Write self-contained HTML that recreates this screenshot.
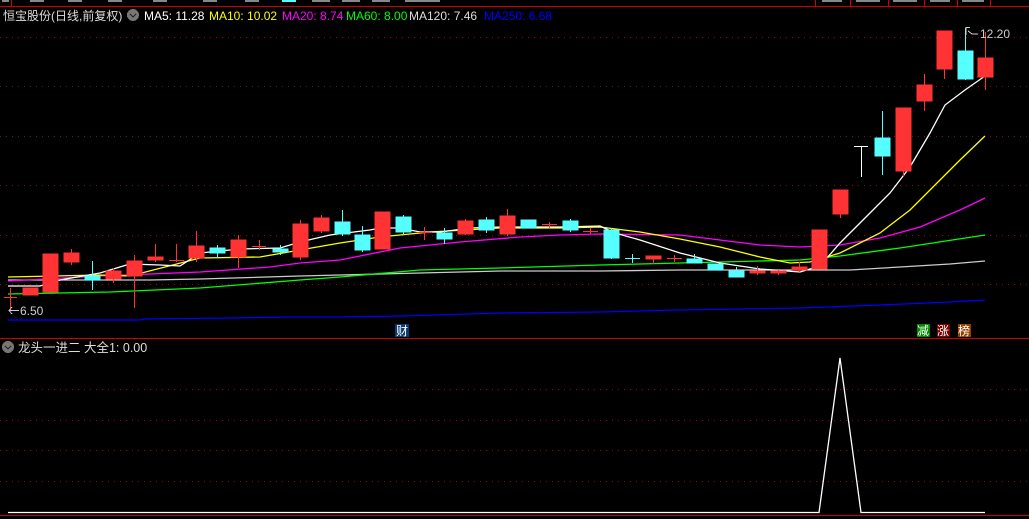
<!DOCTYPE html>
<html><head><meta charset="utf-8"><style>
html,body{margin:0;padding:0;background:#000;width:1029px;height:519px;overflow:hidden}
svg{display:block}
text{font-family:"Liberation Sans","Noto Sans CJK SC",sans-serif}
</style></head><body>
<svg width="1029" height="519" viewBox="0 0 1029 519" xmlns="http://www.w3.org/2000/svg" shape-rendering="crispEdges">
<rect width="1029" height="519" fill="#000"/>
<line x1="0" y1="6.5" x2="1029" y2="6.5" stroke="#c00" stroke-width="1"/>
<g stroke="#c00"><line x1="11.5" y1="0" x2="11.5" y2="6"/><line x1="815.5" y1="0" x2="815.5" y2="6"/><line x1="850.5" y1="0" x2="850.5" y2="6"/><line x1="888.5" y1="0" x2="888.5" y2="6"/><line x1="924.5" y1="0" x2="924.5" y2="6"/><line x1="957.5" y1="0" x2="957.5" y2="6"/><line x1="990.5" y1="0" x2="990.5" y2="6"/></g>
<g fill="#888"><rect x="2" y="0" width="7" height="2"/><rect x="30" y="0" width="14" height="2"/><rect x="68" y="0" width="14" height="2"/><rect x="108" y="0" width="14" height="2"/><rect x="153" y="0" width="14" height="2"/><rect x="203" y="0" width="14" height="2"/><rect x="245" y="0" width="14" height="2"/><rect x="282" y="0" width="14" height="2" fill="#5ff"/><rect x="312" y="0" width="18" height="2"/><rect x="342" y="0" width="18" height="2"/><rect x="372" y="0" width="18" height="2"/><rect x="405" y="0" width="35" height="2"/><rect x="822" y="0" width="20" height="2"/><rect x="856" y="0" width="24" height="2"/><rect x="893" y="0" width="24" height="2"/><rect x="930" y="0" width="20" height="2"/><rect x="962" y="0" width="22" height="2"/></g>
<text x="3" y="20" font-size="12" fill="#ddd">恒宝股份(日线,前复权)</text>
<circle cx="133" cy="15" r="6" fill="#777"/><path d="M130 14 L133 17 L136 14" stroke="#222" stroke-width="1.3" fill="none"/>
<text y="20" font-size="12" xml:space="preserve"><tspan x="144" fill="#fff">MA5: 11.28</tspan><tspan x="209" fill="#ff0">MA10: 10.02</tspan><tspan x="282" fill="#f0f">MA20: 8.74</tspan><tspan x="346" fill="#0f0">MA60: 8.00</tspan><tspan x="409" fill="#ddd">MA120: 7.46</tspan><tspan x="484" fill="#00f">MA250: 6.68</tspan></text>
<g stroke="#a00" stroke-dasharray="1 5" stroke-width="1">
<line x1="0" y1="37.5" x2="1029" y2="37.5"/><line x1="0" y1="86.5" x2="1029" y2="86.5"/><line x1="0" y1="136.5" x2="1029" y2="136.5"/><line x1="0" y1="185.5" x2="1029" y2="185.5"/><line x1="0" y1="235.5" x2="1029" y2="235.5"/><line x1="0" y1="284.5" x2="1029" y2="284.5"/>
<line x1="0" y1="389.5" x2="1029" y2="389.5"/><line x1="0" y1="420.5" x2="1029" y2="420.5"/><line x1="0" y1="450.5" x2="1029" y2="450.5"/><line x1="0" y1="481.5" x2="1029" y2="481.5"/>
</g>
<g fill="none" stroke-width="1.3" shape-rendering="auto">
<polyline stroke="#00f" points="8,320 140,320 145,319 230,318 290,317 340,317 400,316 500,313 600,312 680,310 800,308 880,305 950,302 985,300"/>
<polyline stroke="#ccc" points="8,280 150,280 200,279 300,276 340,275 420,273 500,271 600,271 680,270 850,270 900,267 950,264 985,261"/>
<polyline stroke="#0f0" points="8,294 110,292 200,288 300,280 340,277 420,270 500,268 600,265 680,263 760,261 800,260 840,256 900,248 985,235"/>
<polyline stroke="#f0f" points="8,281 100,276 200,272 270,267 300,263 340,260 400,248 460,242 520,237 560,235 600,234 680,235 720,240 760,245 800,247 840,245 880,238 920,227 960,210 985,198"/>
<polyline stroke="#ff0" points="8,277 100,275 130,276 200,258 260,257 300,250 340,243 380,237 430,232 500,228 560,228 600,227 640,232 680,239 720,247 760,257 790,263 810,262 840,253 880,233 910,210 940,180 960,160 985,136"/>
<polyline stroke="#fff" points="8,286 40,286 60,280 100,273 130,264 160,265 180,266 200,253 240,249 280,248 300,242 330,235 370,230 380,228 400,228 420,232 440,232 470,228 500,227 560,227 600,226 615,233 640,240 680,253 720,263 760,269 800,272 820,266 840,243 870,213 890,193 910,167 930,133 945,105 965,90 985,76"/>
</g>
<g fill="#f33" stroke="#f33">
<line x1="10.5" y1="288" x2="10.5" y2="310"/><line x1="4" y1="297.5" x2="17" y2="297.5"/>
<rect x="23" y="288" width="15" height="7"/>
<rect x="43" y="254" width="15" height="38"/>
<line x1="71.5" y1="249" x2="71.5" y2="265"/><rect x="64" y="253" width="15" height="9"/>
<line x1="113.5" y1="268" x2="113.5" y2="283"/><rect x="106" y="271" width="15" height="8"/>
<line x1="134.5" y1="255" x2="134.5" y2="308"/><rect x="127" y="261" width="15" height="15"/>
<line x1="155.5" y1="244" x2="155.5" y2="262"/><rect x="148" y="257" width="15" height="3"/>
<line x1="176.5" y1="244" x2="176.5" y2="262"/><line x1="169" y1="260.5" x2="184" y2="260.5"/>
<line x1="196.5" y1="231" x2="196.5" y2="262"/><rect x="189" y="246" width="15" height="12"/>
<line x1="238.5" y1="235" x2="238.5" y2="268"/><rect x="231" y="240" width="15" height="17"/>
<line x1="259.5" y1="240" x2="259.5" y2="250"/><line x1="252" y1="246.5" x2="266" y2="246.5"/>
<line x1="300.5" y1="220" x2="300.5" y2="260"/><rect x="293" y="224" width="15" height="33"/>
<line x1="321.5" y1="215" x2="321.5" y2="233"/><rect x="314" y="218" width="15" height="13"/>
<rect x="375" y="212" width="15" height="37"/>
<line x1="424.5" y1="227" x2="424.5" y2="240"/><line x1="417" y1="232.5" x2="432" y2="232.5"/>
<line x1="465.5" y1="219" x2="465.5" y2="235"/><rect x="458" y="221" width="15" height="13"/>
<line x1="507.5" y1="209" x2="507.5" y2="236"/><rect x="500" y="216" width="15" height="18"/>
<line x1="549.5" y1="222" x2="549.5" y2="228"/><line x1="542" y1="224.5" x2="557" y2="224.5"/>
<line x1="590.5" y1="228" x2="590.5" y2="234"/><line x1="583" y1="231.5" x2="598" y2="231.5"/>
<line x1="653.5" y1="256" x2="653.5" y2="264"/><rect x="646" y="256" width="15" height="3"/>
<line x1="674.5" y1="255" x2="674.5" y2="262"/><line x1="667" y1="258.5" x2="682" y2="258.5"/>
<line x1="757.5" y1="266" x2="757.5" y2="275"/><rect x="750" y="271" width="15" height="2"/>
<line x1="778.5" y1="270" x2="778.5" y2="275"/><rect x="771" y="271" width="15" height="2"/>
<line x1="799.5" y1="262" x2="799.5" y2="272"/><rect x="792" y="267" width="15" height="3"/>
<rect x="812" y="230" width="15" height="39"/>
<line x1="840.5" y1="214" x2="840.5" y2="218"/><rect x="833" y="190" width="15" height="24"/>
<line x1="903.5" y1="170" x2="903.5" y2="177"/><rect x="896" y="108" width="15" height="63"/>
<line x1="924.5" y1="74" x2="924.5" y2="111"/><rect x="917" y="85" width="15" height="16"/>
<line x1="944.5" y1="68" x2="944.5" y2="79"/><rect x="937" y="31" width="15" height="38"/>
<line x1="985.5" y1="32" x2="985.5" y2="90"/><rect x="978" y="58" width="15" height="19"/>
</g>
<g fill="#5ff" stroke="#5ff">
<line x1="92.5" y1="261" x2="92.5" y2="290"/><rect x="85" y="276" width="15" height="4"/>
<line x1="217.5" y1="245" x2="217.5" y2="258"/><rect x="210" y="248" width="15" height="5"/>
<line x1="280.5" y1="245" x2="280.5" y2="255"/><rect x="273" y="249" width="15" height="3"/>
<line x1="342.5" y1="210" x2="342.5" y2="236"/><rect x="335" y="222" width="15" height="12"/>
<line x1="362.5" y1="226" x2="362.5" y2="252"/><rect x="355" y="235" width="15" height="15"/>
<line x1="403.5" y1="215" x2="403.5" y2="235"/><rect x="396" y="217" width="15" height="15"/>
<line x1="444.5" y1="228" x2="444.5" y2="244"/><rect x="437" y="233" width="15" height="6"/>
<line x1="486.5" y1="217" x2="486.5" y2="233"/><rect x="479" y="220" width="15" height="10"/>
<rect x="521" y="220" width="15" height="8"/>
<line x1="570.5" y1="219" x2="570.5" y2="232"/><rect x="563" y="221" width="15" height="9"/>
<line x1="611.5" y1="228" x2="611.5" y2="259"/><rect x="604" y="230" width="15" height="28"/>
<line x1="632.5" y1="254" x2="632.5" y2="263"/><line x1="625" y1="258.5" x2="640" y2="258.5"/>
<line x1="694.5" y1="254" x2="694.5" y2="263"/><rect x="687" y="259" width="15" height="4"/>
<rect x="708" y="264" width="15" height="6"/>
<line x1="736.5" y1="267" x2="736.5" y2="277"/><rect x="729" y="271" width="15" height="6"/>
<line x1="882.5" y1="111" x2="882.5" y2="175"/><rect x="875" y="138" width="15" height="18"/>
<line x1="965.5" y1="28" x2="965.5" y2="80"/><rect x="958" y="51" width="15" height="28"/>
</g>
<g stroke="#fff"><line x1="854" y1="146.5" x2="868" y2="146.5"/><line x1="861.5" y1="146" x2="861.5" y2="177"/></g>
<g stroke="#ccc" fill="none" stroke-width="1"><line x1="9" y1="310.5" x2="19" y2="310.5"/><path d="M12 307 L9 310.5 L12 314"/></g>
<text x="20" y="315" font-size="12" fill="#ccc">6.50</text>
<g stroke="#ccc" fill="none"><line x1="966" y1="27.5" x2="970" y2="27.5"/><path d="M966 27 L966 35"/><path d="M968 31 L972 34 L978 34"/></g>
<text x="980" y="38" font-size="12" fill="#ccc">12.20</text>
<rect x="395" y="324" width="14" height="13" fill="#0a3a6a"/><text x="396" y="335" font-size="12" fill="#fff">财</text>
<rect x="917" y="324" width="13" height="13" fill="#080"/><text x="917" y="335" font-size="12" fill="#fff">减</text>
<rect x="937" y="324" width="13" height="13" fill="#700"/><text x="937" y="335" font-size="12" fill="#fff">涨</text>
<rect x="958" y="324" width="13" height="13" fill="#964000"/><text x="958" y="335" font-size="12" fill="#fff">榜</text>
<line x1="0" y1="338.5" x2="1029" y2="338.5" stroke="#c00"/>
<circle cx="8" cy="347" r="6" fill="#777"/><path d="M5 346 L8 349 L11 346" stroke="#222" stroke-width="1.3" fill="none"/>
<text x="18" y="352" font-size="12.5" fill="#ddd">龙头一进二 大全1: 0.00</text>
<polyline fill="none" stroke="#fff" stroke-width="1.3" shape-rendering="auto" points="8,512.5 819,512.5 840,358 861,512.5 985,512.5"/>
<line x1="0" y1="515.5" x2="1029" y2="515.5" stroke="#c00"/>
</svg>
</body></html>
